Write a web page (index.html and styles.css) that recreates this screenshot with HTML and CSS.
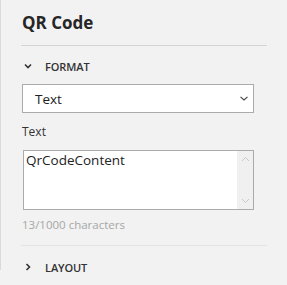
FILE: index.html
```html
<!DOCTYPE html>
<html>
<head>
<meta charset="utf-8">
<link rel="stylesheet" href="styles.css">
</head>
<body>
<div class="panel">
  <div class="inner">
    <h1 class="title">QR Code</h1>
    <div class="sep"></div>
    <div class="section-head">
      <svg class="chev" width="8" height="6" viewBox="0 0 8 6"><path d="M1 1.5 L4 4.5 L7 1.5" fill="none" stroke="#333" stroke-width="1.6"/></svg>
      <span>FORMAT</span>
    </div>
    <div class="select">
      <span>Text</span>
      <svg width="8" height="5" viewBox="0 0 8 5"><path d="M0.5 0.8 L4 4 L7.5 0.8" fill="none" stroke="#444" stroke-width="1.1"/></svg>
    </div>
    <div class="label">Text</div>
    <div class="textarea">
      <div class="ta-text">QrCodeContent</div>
      <div class="scroll">
        <svg width="9" height="6" viewBox="0 0 9 6"><path d="M1 5 L4.5 1.5 L8 5" fill="none" stroke="#c8c8c8" stroke-width="1"/></svg>
        <svg width="9" height="6" viewBox="0 0 9 6"><path d="M1 1 L4.5 4.5 L8 1" fill="none" stroke="#c8c8c8" stroke-width="1"/></svg>
      </div>
    </div>
    <div class="count">13/1000 characters</div>
    <div class="sep light"></div>
    <div class="section-head layout">
      <svg class="chev" width="6" height="8" viewBox="0 0 6 8"><path d="M1.5 1 L4.5 4 L1.5 7" fill="none" stroke="#333" stroke-width="1.6"/></svg>
      <span>LAYOUT</span>
    </div>
  </div>
</div>
</body>
</html>
```
FILE: styles.css
```css
html, body {
  margin: 0;
  padding: 0;
  background: #f2f2f2;
  font-family: "Open Sans", "Noto Sans", sans-serif;
  color: #222;
}
.panel {
  width: 287px;
  height: 285px;
  box-sizing: border-box;
}
.inner {
  border-left: 1px solid #dadada;
  height: 270px;
  padding-left: 21px;
  width: 245px;
}
.title {
  margin: 0;
  padding-top: 12px;
  font-size: 17px;
  font-weight: 700;
  line-height: 22px;
  color: #262626;
  height: 33px;
}
.sep {
  height: 1px;
  background: #d4d4d4;
  margin-left: -1px;
}
.sep.light {
  background: #e3e3e3;
  margin-top: 12px;
}
.section-head {
  display: flex;
  align-items: center;
  height: 40px;
  font-size: 11px;
  font-weight: 600;
  color: #333;
  letter-spacing: -0.1px;
}
.section-head .chev {
  margin-left: 2px;
  margin-right: 13px;
}
.section-head.layout {
  height: 42px;
}
.section-head.layout .chev {
  margin-left: 3px;
  margin-right: 14px;
}
.select {
  margin-top: -2px;
  width: 232px;
  height: 29px;
  box-sizing: border-box;
  border: 1px solid #ababab;
  background: #fff;
  display: flex;
  align-items: center;
  justify-content: space-between;
  padding: 0 5px 0 12px;
  font-size: 13.5px;
  color: #222;
}
.label {
  font-size: 12px;
  color: #333;
  margin-top: 10px;
  height: 18px;
  line-height: 18px;
}
.textarea {
  margin-top: 9px;
  margin-left: 1px;
  width: 231px;
  height: 60px;
  box-sizing: border-box;
  border: 1px solid #ababab;
  background: #fff;
  display: flex;
}
.ta-text {
  flex: 1;
  font-size: 13.5px;
  padding: 0 0 0 2px;
  line-height: 18px;
  color: #222;
}
.scroll {
  width: 16px;
  background: #f0f0f0;
  display: flex;
  flex-direction: column;
  justify-content: space-between;
  align-items: center;
  padding: 5px 0;
}
.count {
  font-size: 11.5px;
  color: #a6a6a6;
  margin-top: 7px;
  line-height: 16px;
}
```
